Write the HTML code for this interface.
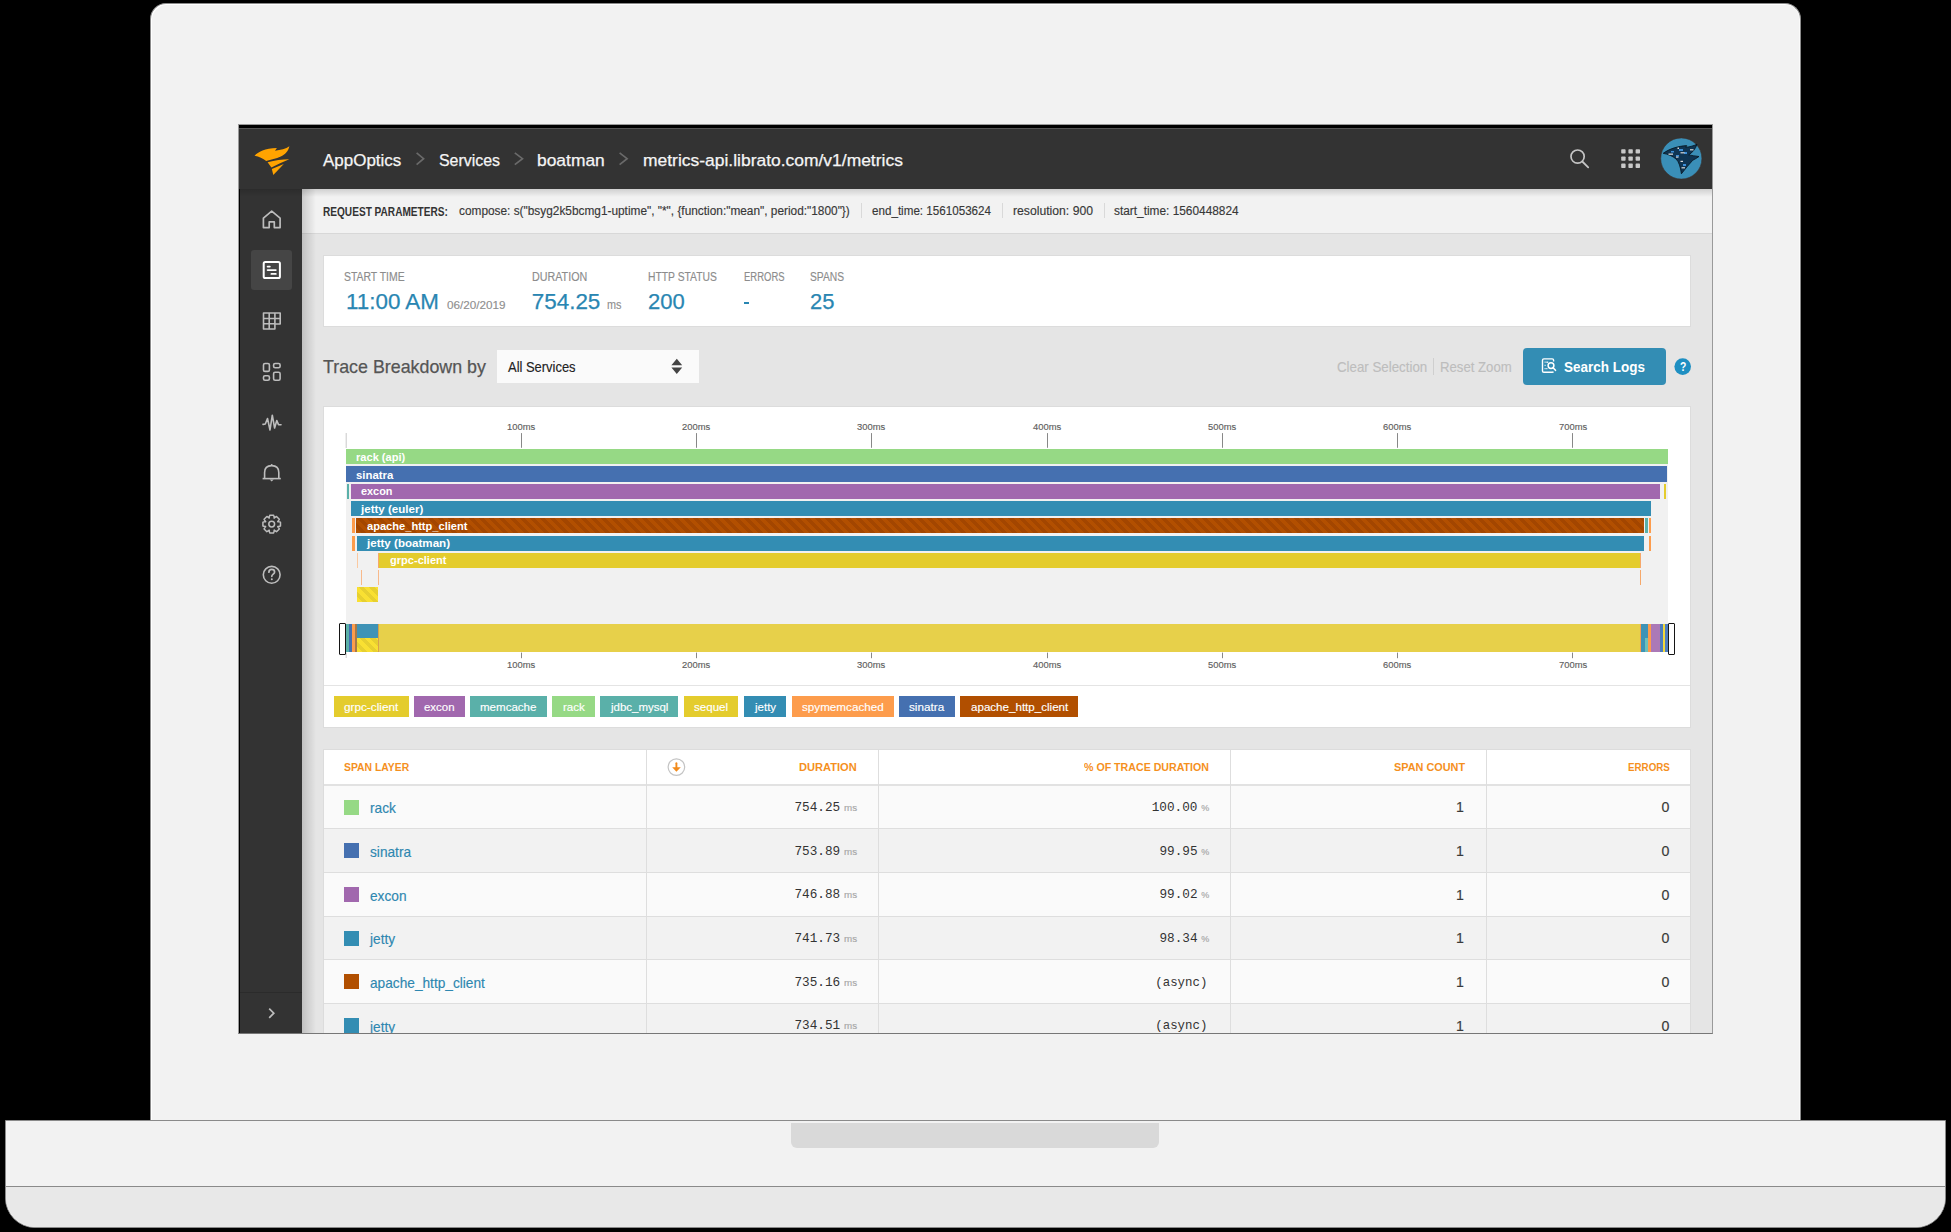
<!DOCTYPE html><html><head><meta charset="utf-8"><style>
*{margin:0;padding:0;box-sizing:border-box}
html,body{width:1951px;height:1232px;overflow:hidden;background:#000;font-family:"Liberation Sans",sans-serif}
.a{position:absolute}
.t{position:absolute;white-space:nowrap;transform-origin:0 0}
svg{position:absolute;overflow:visible}
#lid{left:150px;top:3px;width:1651px;height:1118px;background:#f2f2f2;border:1px solid #8a8a8a;border-bottom:none;border-radius:16px 16px 0 0;box-shadow:inset 1px 1px 0 #fff,inset -1px 0 0 #fafafa}
#base{left:5px;top:1120px;width:1941px;height:108px;background:#f2f2f2;border:1px solid #8a8a8a;border-radius:0 0 30px 30px;overflow:hidden}
#base .low{left:0;top:65px;width:100%;height:45px;background:#e8e8e8;border-top:1px solid #8a8a8a}
#notch{left:785px;top:2px;width:368px;height:25px;background:#d9d9d9;border-radius:0 0 6px 6px}
#screen{left:238px;top:124px;width:1475px;height:910px;background:#000;border:1px solid #9a9a9a;border-bottom-color:#777;overflow:hidden}
#S{left:-239px;top:-125px;width:1951px;height:1232px}
</style></head><body>
<div id="lid" class="a"></div>
<div id="base" class="a"><div class="a low"></div><div id="notch" class="a"></div></div>
<div id="screen" class="a"><div id="S" class="a">
<div class="a" style="left:239.00px;top:128.00px;width:1473.00px;height:61.00px;background:#333;"></div>
<div class="a" style="left:239.00px;top:128.00px;width:1473.00px;height:1.00px;background:#555;"></div>
<svg style="left:0;top:0" width="1951" height="1232" viewBox="0 0 1951 1232"><path fill="#ffa300" d="M254.6,155.7 C258,151.6 265,148.4 276.9,147.9 L275.0,150.7 C280.5,150.2 286,148.8 289.4,146.3 C288.3,151.3 285,154.6 280.8,156.6 C276,158.7 271,159.9 266.2,161.0 C263,158.6 259,156.4 254.6,155.7 Z"/><path fill="#ffa300" d="M267.6,162.2 C275,160.3 282,159.3 289.3,159.2 C283,161.7 277,164.5 271.4,167.6 Z"/><path fill="#ffa300" d="M271.8,169.0 L283.8,164.0 L273.3,174.9 Z"/></svg>
<div class="t" style="left:323.20px;top:153.00px;font-size:16.8px;line-height:16.8px;font-family:'Liberation Sans',sans-serif;color:#f5f5f5;transform:scaleX(1.0116);-webkit-text-stroke:0.25px #f5f5f5;">AppOptics</div>
<div class="t" style="left:438.50px;top:153.00px;font-size:16.8px;line-height:16.8px;font-family:'Liberation Sans',sans-serif;color:#f5f5f5;transform:scaleX(0.9488);-webkit-text-stroke:0.25px #f5f5f5;">Services</div>
<div class="t" style="left:537.10px;top:153.00px;font-size:16.8px;line-height:16.8px;font-family:'Liberation Sans',sans-serif;color:#f5f5f5;transform:scaleX(1.0375);-webkit-text-stroke:0.25px #f5f5f5;">boatman</div>
<div class="t" style="left:642.80px;top:153.00px;font-size:16.8px;line-height:16.8px;font-family:'Liberation Sans',sans-serif;color:#f5f5f5;transform:scaleX(1.0398);-webkit-text-stroke:0.25px #f5f5f5;">metrics-api.librato.com/v1/metrics</div>
<svg style="left:0;top:0" width="1951" height="1232" viewBox="0 0 1951 1232"><polyline points="416.6,152.8 423.6,158.7 416.6,164.6" fill="none" stroke="#6a6a6a" stroke-width="1.7"/><polyline points="514.8,152.8 522.5,158.7 514.8,164.6" fill="none" stroke="#6a6a6a" stroke-width="1.7"/><polyline points="619.6,152.8 627.1,158.7 619.6,164.6" fill="none" stroke="#6a6a6a" stroke-width="1.7"/></svg>
<svg style="left:0;top:0" width="1951" height="1232" viewBox="0 0 1951 1232"><circle cx="1577.6" cy="156.6" r="6.6" fill="none" stroke="#c4c4c4" stroke-width="1.7"/><line x1="1582.3" y1="161.5" x2="1588.2" y2="167.3" stroke="#c4c4c4" stroke-width="1.8" stroke-linecap="round"/></svg>
<svg style="left:0;top:0" width="1951" height="1232" viewBox="0 0 1951 1232"><rect x="1621.2" y="149.2" width="4.4" height="4.4" rx="0.8" fill="#c8c8c8"/><rect x="1621.2" y="156.4" width="4.4" height="4.4" rx="0.8" fill="#c8c8c8"/><rect x="1621.2" y="163.6" width="4.4" height="4.4" rx="0.8" fill="#c8c8c8"/><rect x="1628.4" y="149.2" width="4.4" height="4.4" rx="0.8" fill="#c8c8c8"/><rect x="1628.4" y="156.4" width="4.4" height="4.4" rx="0.8" fill="#c8c8c8"/><rect x="1628.4" y="163.6" width="4.4" height="4.4" rx="0.8" fill="#c8c8c8"/><rect x="1635.6" y="149.2" width="4.4" height="4.4" rx="0.8" fill="#c8c8c8"/><rect x="1635.6" y="156.4" width="4.4" height="4.4" rx="0.8" fill="#c8c8c8"/><rect x="1635.6" y="163.6" width="4.4" height="4.4" rx="0.8" fill="#c8c8c8"/></svg>
<svg style="left:0;top:0" width="1951" height="1232" viewBox="0 0 1951 1232"><circle cx="1681.3" cy="158.5" r="20.6" fill="#3a8fb8" stroke="#3b2f2a" stroke-width="0.6"/><path fill="#0f3553" stroke="#06121c" stroke-width="0.8" d="M1663.2,153.3 C1670,148.5 1678,146.2 1686.7,145.6 L1685.8,147.3 C1690,146.8 1694,145.8 1697.0,144.2 C1695.5,149 1692.5,152.5 1688.7,154.9 C1692,155.6 1695.5,156 1699.0,156.5 C1697,158 1694.8,159.2 1692.7,160.3 C1689,164.5 1685,169 1681.4,173.8 C1680.5,167 1679,162 1676.1,159.0 C1672.5,156 1668,154.2 1663.2,153.3 Z"/><g fill="#3d8fd8"><rect x="1671" y="151" width="3" height="1.5"/><rect x="1679" y="149" width="4" height="2"/><rect x="1684" y="152" width="3" height="2"/><rect x="1683" y="164" width="3" height="2"/><rect x="1676" y="155" width="3" height="1.6"/></g><g fill="#d8d8d8"><rect x="1668.5" y="153.5" width="4.5" height="1.3"/><rect x="1680.5" y="152.2" width="4" height="1.2"/><rect x="1690" y="149.2" width="3.5" height="1.2"/><rect x="1676" y="156.5" width="2.5" height="1.2"/><rect x="1680.5" y="160.8" width="2.5" height="1.2"/><rect x="1681.5" y="167.2" width="3.5" height="1.2"/><rect x="1677.5" y="147.5" width="1.5" height="1.5"/></g></svg>
<div class="a" style="left:240.00px;top:189.00px;width:62.00px;height:845.00px;background:#333;"></div>
<div class="a" style="left:251.40px;top:250.00px;width:40.60px;height:40.40px;background:#454545;border-radius:3px"></div>
<div class="a" style="left:240.00px;top:992.00px;width:62.00px;height:1.00px;background:#2b2b2b;"></div>
<svg style="left:0;top:0" width="1951" height="1232" viewBox="0 0 1951 1232"><path fill="none" stroke="#bdbdbd" stroke-width="1.7" stroke-linejoin="round" d="M263.4,218.2 L271.7,211.2 L280.1,218.2 L280.1,227.6 L274.3,227.6 L274.3,221.9 L269.2,221.9 L269.2,227.6 L263.4,227.6 Z"/><rect x="263.7" y="262" width="16.2" height="16" rx="1.6" fill="none" stroke="#fff" stroke-width="2"/><g stroke="#fff" stroke-width="1.8" stroke-linecap="round"><line x1="267.6" y1="266.6" x2="269.8" y2="266.6"/><line x1="267.6" y1="270.1" x2="275.8" y2="270.1"/><line x1="271.4" y1="273.9" x2="275.8" y2="273.9"/></g><path fill="none" stroke="#bdbdbd" stroke-width="1.6" stroke-linejoin="round" d="M263.5,313 H280.2 V324 H274.9 V329 H263.5 Z M263.5,318.5 H280.2 M263.5,323.8 H274.9 M269.2,313 V329 M274.9,313 V324"/><rect x="263.5" y="363.5" width="5.9" height="7.9" rx="1.5" fill="none" stroke="#bdbdbd" stroke-width="1.6"/><rect x="273.6" y="363.5" width="6.5" height="4.3" rx="1.5" fill="none" stroke="#bdbdbd" stroke-width="1.6"/><rect x="263.5" y="375.8" width="5.9" height="4.4" rx="1.5" fill="none" stroke="#bdbdbd" stroke-width="1.6"/><rect x="273.6" y="372.2" width="6.5" height="8.0" rx="1.5" fill="none" stroke="#bdbdbd" stroke-width="1.6"/><polyline fill="none" stroke="#bdbdbd" stroke-width="1.6" stroke-linejoin="round" stroke-linecap="round" points="263,424.4 265.3,424 267.5,418.5 270,430 272.3,415.2 274.6,428 276.8,420.5 278.5,424.6 281,424.8"/><path fill="none" stroke="#bdbdbd" stroke-width="1.6" stroke-linejoin="round" d="M264.6,478.2 V472.5 C264.6,468 267.6,465.6 271.7,465.6 C275.8,465.6 278.8,468 278.8,472.5 V478.2"/><line x1="262.6" y1="478.6" x2="280.8" y2="478.6" stroke="#bdbdbd" stroke-width="1.6"/><path d="M269.6,479.4 H273.8 L271.7,481.6 Z" fill="#bdbdbd"/><circle cx="271.7" cy="464.9" r="0.9" fill="#bdbdbd"/><polygon fill="none" stroke="#bdbdbd" stroke-width="1.5" stroke-linejoin="round" points="280.48,522.14 280.48,526.06 277.73,526.79 277.86,526.46 279.30,528.92 276.52,531.70 274.06,530.26 274.39,530.13 273.66,532.88 269.74,532.88 269.01,530.13 269.34,530.26 266.88,531.70 264.10,528.92 265.54,526.46 265.67,526.79 262.92,526.06 262.92,522.14 265.67,521.41 265.54,521.74 264.10,519.28 266.88,516.50 269.34,517.94 269.01,518.07 269.74,515.32 273.66,515.32 274.39,518.07 274.06,517.94 276.52,516.50 279.30,519.28 277.86,521.74 277.73,521.41"/><circle cx="271.7" cy="524.1" r="2.9" fill="none" stroke="#bdbdbd" stroke-width="1.5"/><circle cx="271.7" cy="574.8" r="8.4" fill="none" stroke="#bdbdbd" stroke-width="1.6"/><path fill="none" stroke="#bdbdbd" stroke-width="1.7" stroke-linecap="round" d="M268.9,572.2 C268.9,570.3 270.1,569.3 271.8,569.3 C273.5,569.3 274.6,570.4 274.6,571.9 C274.6,574 271.8,574.2 271.8,576.3"/><circle cx="271.8" cy="579.3" r="1" fill="#bdbdbd"/><polyline points="269.2,1008.6 273.8,1013.2 269.2,1017.8" fill="none" stroke="#bdbdbd" stroke-width="1.7"/></svg>
<div class="a" style="left:302.00px;top:189.00px;width:1410.00px;height:845.00px;background:#e5e5e5;"></div>
<div class="a" style="left:302.00px;top:189.00px;width:1410.00px;height:45.00px;background:#f2f2f2;"></div>
<div class="a" style="left:302.00px;top:233.00px;width:1410.00px;height:1.00px;background:#d8d8d8;"></div>
<div class="a" style="left:302.00px;top:189.00px;width:14.00px;height:845.00px;background:linear-gradient(90deg,rgba(0,0,0,.16),rgba(0,0,0,0));"></div>
<div class="a" style="left:240.00px;top:189.00px;width:1472.00px;height:8.00px;background:linear-gradient(180deg,rgba(0,0,0,.14),rgba(0,0,0,0));"></div>
<div class="t" style="left:323.10px;top:206.00px;font-size:12px;line-height:12px;font-family:'Liberation Sans',sans-serif;color:#333;font-weight:bold;transform:scaleX(0.8411);">REQUEST PARAMETERS:</div>
<div class="t" style="left:459.30px;top:205.00px;font-size:12px;line-height:12px;font-family:'Liberation Sans',sans-serif;color:#383838;transform:scaleX(0.9877);-webkit-text-stroke:0.15px #383838;">compose: s("bsyg2k5bcmg1-uptime", "*", {function:"mean", period:"1800"})</div>
<div class="t" style="left:871.80px;top:205.00px;font-size:12px;line-height:12px;font-family:'Liberation Sans',sans-serif;color:#383838;transform:scaleX(0.9695);-webkit-text-stroke:0.15px #383838;">end_time: 1561053624</div>
<div class="t" style="left:1013.00px;top:205.00px;font-size:12px;line-height:12px;font-family:'Liberation Sans',sans-serif;color:#383838;transform:scaleX(1.0159);-webkit-text-stroke:0.15px #383838;">resolution: 900</div>
<div class="t" style="left:1114.40px;top:205.00px;font-size:12px;line-height:12px;font-family:'Liberation Sans',sans-serif;color:#383838;transform:scaleX(0.9885);-webkit-text-stroke:0.15px #383838;">start_time: 1560448824</div>
<div class="a" style="left:860.50px;top:203.30px;width:1.00px;height:14.70px;background:#d9d9d9;"></div>
<div class="a" style="left:1002.00px;top:203.30px;width:1.00px;height:14.70px;background:#d9d9d9;"></div>
<div class="a" style="left:1103.50px;top:203.30px;width:1.00px;height:14.70px;background:#d9d9d9;"></div>
<div class="a" style="left:323.60px;top:256.20px;width:1366.40px;height:69.80px;background:#fff;box-shadow:0 0 0 1px #dcdcdc"></div>
<div class="t" style="left:344.00px;top:271.00px;font-size:12.0px;line-height:12.0px;font-family:'Liberation Sans',sans-serif;color:#8c8c8c;transform:scaleX(0.8688);-webkit-text-stroke:0.15px #8c8c8c;">START TIME</div>
<div class="t" style="left:531.80px;top:271.00px;font-size:12.0px;line-height:12.0px;font-family:'Liberation Sans',sans-serif;color:#8c8c8c;transform:scaleX(0.8939);-webkit-text-stroke:0.15px #8c8c8c;">DURATION</div>
<div class="t" style="left:648.00px;top:271.00px;font-size:12.0px;line-height:12.0px;font-family:'Liberation Sans',sans-serif;color:#8c8c8c;transform:scaleX(0.8612);-webkit-text-stroke:0.15px #8c8c8c;">HTTP STATUS</div>
<div class="t" style="left:743.50px;top:271.00px;font-size:12.0px;line-height:12.0px;font-family:'Liberation Sans',sans-serif;color:#8c8c8c;transform:scaleX(0.7902);-webkit-text-stroke:0.15px #8c8c8c;">ERRORS</div>
<div class="t" style="left:810.00px;top:271.00px;font-size:12.0px;line-height:12.0px;font-family:'Liberation Sans',sans-serif;color:#8c8c8c;transform:scaleX(0.8553);-webkit-text-stroke:0.15px #8c8c8c;">SPANS</div>
<div class="t" style="left:346.00px;top:291.00px;font-size:22.4px;line-height:22.4px;font-family:'Liberation Sans',sans-serif;color:#2986b2;-webkit-text-stroke:0.25px #2986b2;">11:00 AM</div>
<div class="t" style="left:446.50px;top:300.00px;font-size:11.5px;line-height:11.5px;font-family:'Liberation Sans',sans-serif;color:#8f8f8f;transform:scaleX(1.0174);-webkit-text-stroke:0.15px #8f8f8f;">06/20/2019</div>
<div class="t" style="left:531.80px;top:291.00px;font-size:22.4px;line-height:22.4px;font-family:'Liberation Sans',sans-serif;color:#2986b2;-webkit-text-stroke:0.25px #2986b2;">754.25</div>
<div class="t" style="left:606.60px;top:298.00px;font-size:13px;line-height:13px;font-family:'Liberation Sans',sans-serif;color:#8f8f8f;transform:scaleX(0.8348);-webkit-text-stroke:0.15px #8f8f8f;">ms</div>
<div class="t" style="left:648.00px;top:291.00px;font-size:22.4px;line-height:22.4px;font-family:'Liberation Sans',sans-serif;color:#2986b2;transform:scaleX(0.9826);-webkit-text-stroke:0.25px #2986b2;">200</div>
<div class="a" style="left:743.50px;top:302.20px;width:5.50px;height:2.20px;background:#2986b2;"></div>
<div class="t" style="left:810.00px;top:291.00px;font-size:22.4px;line-height:22.4px;font-family:'Liberation Sans',sans-serif;color:#2986b2;transform:scaleX(0.9800);-webkit-text-stroke:0.25px #2986b2;">25</div>
<div class="t" style="left:323.30px;top:357.00px;font-size:19px;line-height:19px;font-family:'Liberation Sans',sans-serif;color:#555;transform:scaleX(0.9389);-webkit-text-stroke:0.25px #555;">Trace Breakdown by</div>
<div class="a" style="left:497.00px;top:349.60px;width:201.70px;height:33.40px;background:#fafafa;"></div>
<div class="t" style="left:508.40px;top:360.00px;font-size:14.6px;line-height:14.6px;font-family:'Liberation Sans',sans-serif;color:#222;transform:scaleX(0.8866);-webkit-text-stroke:0.15px #222;">All Services</div>
<svg style="left:0;top:0" width="1951" height="1232" viewBox="0 0 1951 1232"><path d="M671.4,365.2 L676.8,358.8 L682.2,365.2 Z M671.4,367.6 L682.2,367.6 L676.8,374 Z" fill="#444"/></svg>
<div class="t" style="left:1337.00px;top:359.00px;font-size:15px;line-height:15px;font-family:'Liberation Sans',sans-serif;color:#bdbdbd;transform:scaleX(0.8865);-webkit-text-stroke:0.15px #bdbdbd;">Clear Selection</div>
<div class="a" style="left:1433.00px;top:358.00px;width:1.00px;height:17.00px;background:#cfcfcf;"></div>
<div class="t" style="left:1439.50px;top:359.00px;font-size:15px;line-height:15px;font-family:'Liberation Sans',sans-serif;color:#bdbdbd;transform:scaleX(0.8771);-webkit-text-stroke:0.15px #bdbdbd;">Reset Zoom</div>
<div class="a" style="left:1522.50px;top:347.80px;width:143.20px;height:36.90px;background:#338db4;border-radius:4px"></div>
<div class="t" style="left:1563.90px;top:359.00px;font-size:15.3px;line-height:15.3px;font-family:'Liberation Sans',sans-serif;color:#fff;font-weight:bold;transform:scaleX(0.8817);">Search Logs</div>
<svg style="left:0;top:0" width="1951" height="1232" viewBox="0 0 1951 1232"><path fill="none" stroke="#fff" stroke-width="1.4" d="M1553.6,361.6 V360.3 Q1553.6,358.9 1552.2,358.9 H1543.9 Q1542.5,358.9 1542.5,360.3 V370.9 Q1542.5,372.3 1543.9,372.3 H1552.2 Q1553.1,372.3 1553.4,371.6"/><g stroke="#fff" stroke-width="1.3"><line x1="1544.6" y1="362.2" x2="1545.6" y2="362.2"/><line x1="1546.3" y1="362.2" x2="1548.2" y2="362.2"/><line x1="1544.6" y1="365.4" x2="1545.6" y2="365.4"/><line x1="1544.6" y1="368.6" x2="1545.6" y2="368.6"/><line x1="1546.3" y1="368.6" x2="1547.4" y2="368.6"/></g><circle cx="1551" cy="365.6" r="2.9" fill="none" stroke="#fff" stroke-width="1.5"/><line x1="1553.1" y1="367.8" x2="1555.5" y2="370.3" stroke="#fff" stroke-width="1.6" stroke-linecap="round"/><circle cx="1682.7" cy="366.6" r="8.3" fill="#1e8fc2"/></svg>
<div class="t" style="left:1679.60px;top:361.00px;font-size:12.5px;line-height:12.5px;font-family:'Liberation Sans',sans-serif;color:#fff;font-weight:bold;transform:scaleX(0.8258);">?</div>
<div class="a" style="left:323.60px;top:406.60px;width:1366.40px;height:320.20px;background:#fff;box-shadow:0 0 0 1px #dcdcdc"></div>
<div class="a" style="left:323.60px;top:684.60px;width:1366.40px;height:1.60px;background:#e4e4e4;"></div>
<div class="a" style="left:346.00px;top:449.00px;width:1322.00px;height:175.00px;background:#f1f1f1;"></div>
<svg style="left:0;top:0" width="1951" height="1232" viewBox="0 0 1951 1232"><line x1="346.2" y1="433" x2="346.2" y2="448" stroke="#c8c8c8" stroke-width="1"/><line x1="521.50" y1="433.1" x2="521.50" y2="447.8" stroke="#888" stroke-width="1"/><line x1="521.50" y1="652.6" x2="521.50" y2="658.2" stroke="#888" stroke-width="1"/><line x1="696.50" y1="433.1" x2="696.50" y2="447.8" stroke="#888" stroke-width="1"/><line x1="696.50" y1="652.6" x2="696.50" y2="658.2" stroke="#888" stroke-width="1"/><line x1="871.50" y1="433.1" x2="871.50" y2="447.8" stroke="#888" stroke-width="1"/><line x1="871.50" y1="652.6" x2="871.50" y2="658.2" stroke="#888" stroke-width="1"/><line x1="1047.50" y1="433.1" x2="1047.50" y2="447.8" stroke="#888" stroke-width="1"/><line x1="1047.50" y1="652.6" x2="1047.50" y2="658.2" stroke="#888" stroke-width="1"/><line x1="1222.50" y1="433.1" x2="1222.50" y2="447.8" stroke="#888" stroke-width="1"/><line x1="1222.50" y1="652.6" x2="1222.50" y2="658.2" stroke="#888" stroke-width="1"/><line x1="1397.50" y1="433.1" x2="1397.50" y2="447.8" stroke="#888" stroke-width="1"/><line x1="1397.50" y1="652.6" x2="1397.50" y2="658.2" stroke="#888" stroke-width="1"/><line x1="1572.50" y1="433.1" x2="1572.50" y2="447.8" stroke="#888" stroke-width="1"/><line x1="1572.50" y1="652.6" x2="1572.50" y2="658.2" stroke="#888" stroke-width="1"/><line x1="346.2" y1="652.6" x2="346.2" y2="658" stroke="#ccc" stroke-width="1"/></svg>
<div class="t" style="left:506.93px;top:422.00px;font-size:9.6px;line-height:9.6px;font-family:'Liberation Sans',sans-serif;color:#606060;transform:scaleX(0.9774);-webkit-text-stroke:0.15px #606060;">100ms</div>
<div class="t" style="left:506.93px;top:660.00px;font-size:9.6px;line-height:9.6px;font-family:'Liberation Sans',sans-serif;color:#606060;transform:scaleX(0.9774);-webkit-text-stroke:0.15px #606060;">100ms</div>
<div class="t" style="left:682.21px;top:422.00px;font-size:9.6px;line-height:9.6px;font-family:'Liberation Sans',sans-serif;color:#606060;transform:scaleX(0.9774);-webkit-text-stroke:0.15px #606060;">200ms</div>
<div class="t" style="left:682.21px;top:660.00px;font-size:9.6px;line-height:9.6px;font-family:'Liberation Sans',sans-serif;color:#606060;transform:scaleX(0.9774);-webkit-text-stroke:0.15px #606060;">200ms</div>
<div class="t" style="left:857.49px;top:422.00px;font-size:9.6px;line-height:9.6px;font-family:'Liberation Sans',sans-serif;color:#606060;transform:scaleX(0.9774);-webkit-text-stroke:0.15px #606060;">300ms</div>
<div class="t" style="left:857.49px;top:660.00px;font-size:9.6px;line-height:9.6px;font-family:'Liberation Sans',sans-serif;color:#606060;transform:scaleX(0.9774);-webkit-text-stroke:0.15px #606060;">300ms</div>
<div class="t" style="left:1032.77px;top:422.00px;font-size:9.6px;line-height:9.6px;font-family:'Liberation Sans',sans-serif;color:#606060;transform:scaleX(0.9774);-webkit-text-stroke:0.15px #606060;">400ms</div>
<div class="t" style="left:1032.77px;top:660.00px;font-size:9.6px;line-height:9.6px;font-family:'Liberation Sans',sans-serif;color:#606060;transform:scaleX(0.9774);-webkit-text-stroke:0.15px #606060;">400ms</div>
<div class="t" style="left:1208.05px;top:422.00px;font-size:9.6px;line-height:9.6px;font-family:'Liberation Sans',sans-serif;color:#606060;transform:scaleX(0.9774);-webkit-text-stroke:0.15px #606060;">500ms</div>
<div class="t" style="left:1208.05px;top:660.00px;font-size:9.6px;line-height:9.6px;font-family:'Liberation Sans',sans-serif;color:#606060;transform:scaleX(0.9774);-webkit-text-stroke:0.15px #606060;">500ms</div>
<div class="t" style="left:1383.33px;top:422.00px;font-size:9.6px;line-height:9.6px;font-family:'Liberation Sans',sans-serif;color:#606060;transform:scaleX(0.9774);-webkit-text-stroke:0.15px #606060;">600ms</div>
<div class="t" style="left:1383.33px;top:660.00px;font-size:9.6px;line-height:9.6px;font-family:'Liberation Sans',sans-serif;color:#606060;transform:scaleX(0.9774);-webkit-text-stroke:0.15px #606060;">600ms</div>
<div class="t" style="left:1558.61px;top:422.00px;font-size:9.6px;line-height:9.6px;font-family:'Liberation Sans',sans-serif;color:#606060;transform:scaleX(0.9774);-webkit-text-stroke:0.15px #606060;">700ms</div>
<div class="t" style="left:1558.61px;top:660.00px;font-size:9.6px;line-height:9.6px;font-family:'Liberation Sans',sans-serif;color:#606060;transform:scaleX(0.9774);-webkit-text-stroke:0.15px #606060;">700ms</div>
<div class="a" style="left:346.10px;top:449.20px;width:1321.80px;height:15.20px;background:#96d985;"></div>
<div class="a" style="left:346.10px;top:466.47px;width:1321.40px;height:15.20px;background:#4570b0;"></div>
<div class="a" style="left:346.80px;top:483.74px;width:2.20px;height:15.20px;background:#5ab0a9;"></div>
<div class="a" style="left:351.40px;top:483.74px;width:1309.00px;height:15.20px;background:#a168ae;"></div>
<div class="a" style="left:1664.00px;top:483.74px;width:1.60px;height:15.20px;background:#e4cc2d;"></div>
<div class="a" style="left:351.40px;top:501.01px;width:1299.80px;height:15.20px;background:#338db3;"></div>
<div class="a" style="left:351.90px;top:518.28px;width:3.30px;height:15.20px;background:#fd9c4c;"></div>
<div class="a" style="left:355.80px;top:518.28px;width:1288.20px;height:15.20px;background:#b14f00;background:repeating-linear-gradient(45deg,#b24f00 0 3.6px,#a34600 3.6px 7.2px)"></div>
<div class="a" style="left:1645.00px;top:518.28px;width:2.80px;height:15.20px;background:#5ab0a9;"></div>
<div class="a" style="left:1648.70px;top:518.28px;width:2.30px;height:15.20px;background:#fd9c4c;"></div>
<div class="a" style="left:351.80px;top:535.55px;width:3.40px;height:15.20px;background:#fd9c4c;"></div>
<div class="a" style="left:357.00px;top:535.55px;width:1287.00px;height:15.20px;background:#338db3;"></div>
<div class="a" style="left:1648.70px;top:535.55px;width:2.30px;height:15.20px;background:#fd9c4c;"></div>
<div class="a" style="left:356.60px;top:552.82px;width:1.00px;height:15.20px;background:#fbc9a0;"></div>
<div class="a" style="left:378.20px;top:552.82px;width:1.10px;height:15.20px;background:#f6a86a;"></div>
<div class="a" style="left:379.30px;top:552.82px;width:1260.70px;height:15.20px;background:#e4cc2d;"></div>
<div class="a" style="left:1640.00px;top:552.82px;width:1.00px;height:15.20px;background:#f6a86a;"></div>
<div class="a" style="left:361.00px;top:570.10px;width:1.00px;height:15.10px;background:#f8b98a;"></div>
<div class="a" style="left:378.00px;top:570.10px;width:1.00px;height:15.10px;background:#f8b98a;"></div>
<div class="a" style="left:1639.80px;top:570.10px;width:1.20px;height:15.10px;background:#f6a86a;"></div>
<div class="a" style="left:357.00px;top:587.30px;width:21.20px;height:15.20px;background:#f9e032;background:repeating-linear-gradient(45deg,#f9e032 0 3.8px,#e7d030 3.8px 7.6px)"></div>
<div class="t" style="left:356.30px;top:452.00px;font-size:11.8px;line-height:11.8px;font-family:'Liberation Sans',sans-serif;color:#fff;font-weight:bold;transform:scaleX(0.9390);">rack (api)</div>
<div class="t" style="left:356.00px;top:470.00px;font-size:11.8px;line-height:11.8px;font-family:'Liberation Sans',sans-serif;color:#fff;font-weight:bold;transform:scaleX(0.9641);">sinatra</div>
<div class="t" style="left:361.40px;top:486.00px;font-size:11.8px;line-height:11.8px;font-family:'Liberation Sans',sans-serif;color:#fff;font-weight:bold;transform:scaleX(0.9235);">excon</div>
<div class="t" style="left:360.95px;top:504.00px;font-size:11.8px;line-height:11.8px;font-family:'Liberation Sans',sans-serif;color:#fff;font-weight:bold;transform:scaleX(0.9804);">jetty (euler)</div>
<div class="t" style="left:366.60px;top:521.00px;font-size:11.8px;line-height:11.8px;font-family:'Liberation Sans',sans-serif;color:#fff;font-weight:bold;transform:scaleX(0.9402);">apache_http_client</div>
<div class="t" style="left:367.25px;top:538.00px;font-size:11.8px;line-height:11.8px;font-family:'Liberation Sans',sans-serif;color:#fff;font-weight:bold;transform:scaleX(0.9817);">jetty (boatman)</div>
<div class="t" style="left:389.70px;top:555.00px;font-size:11.8px;line-height:11.8px;font-family:'Liberation Sans',sans-serif;color:#fff;font-weight:bold;transform:scaleX(0.9372);">grpc-client</div>
<div class="a" style="left:1639.00px;top:623.90px;width:28.80px;height:28.10px;background:#4d7dbd;"></div>
<div class="a" style="left:346.20px;top:623.90px;width:2.80px;height:28.10px;background:#5ab0a9;"></div>
<div class="a" style="left:349.00px;top:623.90px;width:2.80px;height:28.10px;background:#4570b0;"></div>
<div class="a" style="left:351.80px;top:623.90px;width:0.60px;height:28.10px;background:#8aa;"></div>
<div class="a" style="left:352.20px;top:623.90px;width:2.80px;height:28.10px;background:#fd9c4c;"></div>
<div class="a" style="left:355.00px;top:623.90px;width:2.00px;height:28.10px;background:#a57a4a;"></div>
<div class="a" style="left:379.00px;top:623.90px;width:1260.60px;height:28.10px;background:#e7d04a;"></div>
<div class="a" style="left:1639.60px;top:623.90px;width:1.60px;height:28.10px;background:#fd9c4c;"></div>
<div class="a" style="left:1641.20px;top:623.90px;width:6.80px;height:28.10px;background:#3f93b6;"></div>
<div class="a" style="left:1648.00px;top:623.90px;width:3.00px;height:28.10px;background:#fd9c4c;"></div>
<div class="a" style="left:1651.00px;top:623.90px;width:9.30px;height:28.10px;background:#ab79b7;"></div>
<div class="a" style="left:1660.30px;top:623.90px;width:3.10px;height:28.10px;background:#4d7dbd;"></div>
<div class="a" style="left:1663.40px;top:623.90px;width:2.10px;height:28.10px;background:#f2d93a;"></div>
<div class="a" style="left:1665.50px;top:623.90px;width:2.30px;height:28.10px;background:#4d7dbd;"></div>
<div class="a" style="left:357.00px;top:623.90px;width:21.50px;height:14.00px;background:#3f93b6;"></div>
<div class="a" style="left:357.00px;top:637.90px;width:21.50px;height:14.10px;background:#f9e032;background:repeating-linear-gradient(45deg,#f9e032 0 3.8px,#e7d030 3.8px 7.6px)"></div>
<div class="a" style="left:378.30px;top:623.90px;width:1.00px;height:28.10px;background:#d9a24a;"></div>
<div class="a" style="left:1645.00px;top:637.90px;width:3.00px;height:14.10px;background:#6cc0bb;"></div>
<div class="a" style="left:339.00px;top:623.20px;width:6.80px;height:32.00px;background:#fff;border:1.4px solid #151515;border-radius:1px"></div>
<div class="a" style="left:1668.20px;top:623.20px;width:6.80px;height:32.00px;background:#fff;border:1.4px solid #151515;border-radius:1px"></div>
<div class="a" style="left:334.00px;top:696.00px;width:74.80px;height:21.30px;background:#e4cc2d;"></div>

<div class="t" style="left:344.25px;top:702.00px;font-size:11.8px;line-height:11.8px;font-family:'Liberation Sans',sans-serif;color:#fff;transform:scaleX(0.9963);-webkit-text-stroke:0.15px #fff;">grpc-client</div>
<div class="a" style="left:414.00px;top:696.00px;width:51.00px;height:21.30px;background:#a168ae;"></div>

<div class="t" style="left:424.25px;top:702.00px;font-size:11.8px;line-height:11.8px;font-family:'Liberation Sans',sans-serif;color:#fff;transform:scaleX(0.9683);-webkit-text-stroke:0.15px #fff;">excon</div>
<div class="a" style="left:470.00px;top:696.00px;width:77.00px;height:21.30px;background:#5ab0a9;"></div>

<div class="t" style="left:480.25px;top:702.00px;font-size:11.8px;line-height:11.8px;font-family:'Liberation Sans',sans-serif;color:#fff;transform:scaleX(0.9784);-webkit-text-stroke:0.15px #fff;">memcache</div>
<div class="a" style="left:552.30px;top:696.00px;width:42.60px;height:21.30px;background:#96d985;"></div>

<div class="t" style="left:562.55px;top:702.00px;font-size:11.8px;line-height:11.8px;font-family:'Liberation Sans',sans-serif;color:#fff;transform:scaleX(0.9822);-webkit-text-stroke:0.15px #fff;">rack</div>
<div class="a" style="left:600.10px;top:696.00px;width:78.30px;height:21.30px;background:#5ab0a9;"></div>

<div class="t" style="left:610.84px;top:702.00px;font-size:11.8px;line-height:11.8px;font-family:'Liberation Sans',sans-serif;color:#fff;transform:scaleX(0.9714);-webkit-text-stroke:0.15px #fff;">jdbc_mysql</div>
<div class="a" style="left:683.80px;top:696.00px;width:54.60px;height:21.30px;background:#e4cc2d;"></div>

<div class="t" style="left:694.05px;top:702.00px;font-size:11.8px;line-height:11.8px;font-family:'Liberation Sans',sans-serif;color:#fff;transform:scaleX(0.9813);-webkit-text-stroke:0.15px #fff;">sequel</div>
<div class="a" style="left:743.80px;top:696.00px;width:42.20px;height:21.30px;background:#338db3;"></div>

<div class="t" style="left:754.54px;top:702.00px;font-size:11.8px;line-height:11.8px;font-family:'Liberation Sans',sans-serif;color:#fff;transform:scaleX(0.9753);-webkit-text-stroke:0.15px #fff;">jetty</div>
<div class="a" style="left:791.50px;top:696.00px;width:102.30px;height:21.30px;background:#fd9c4c;"></div>

<div class="t" style="left:801.75px;top:702.00px;font-size:11.8px;line-height:11.8px;font-family:'Liberation Sans',sans-serif;color:#fff;transform:scaleX(0.9885);-webkit-text-stroke:0.15px #fff;">spymemcached</div>
<div class="a" style="left:899.20px;top:696.00px;width:55.80px;height:21.30px;background:#4570b0;"></div>

<div class="t" style="left:909.45px;top:702.00px;font-size:11.8px;line-height:11.8px;font-family:'Liberation Sans',sans-serif;color:#fff;transform:scaleX(0.9944);-webkit-text-stroke:0.15px #fff;">sinatra</div>
<div class="a" style="left:960.30px;top:696.00px;width:117.70px;height:21.30px;background:#b14f00;"></div>

<div class="t" style="left:970.55px;top:702.00px;font-size:11.8px;line-height:11.8px;font-family:'Liberation Sans',sans-serif;color:#fff;transform:scaleX(0.9818);-webkit-text-stroke:0.15px #fff;">apache_http_client</div>
<div class="a" style="left:323.60px;top:749.80px;width:1366.40px;height:300.00px;background:#fff;box-shadow:0 0 0 1px #dcdcdc"></div>
<div class="a" style="left:323.60px;top:785.60px;width:1366.40px;height:43.65px;background:#fafafa;"></div>
<div class="a" style="left:323.60px;top:784.60px;width:1366.40px;height:1.20px;background:#dedede;"></div>
<div class="a" style="left:344.00px;top:799.80px;width:15.00px;height:15.00px;background:#96d985;"></div>
<div class="t" style="left:369.80px;top:801.00px;font-size:14.4px;line-height:14.4px;font-family:'Liberation Sans',sans-serif;color:#2e87b0;transform:scaleX(0.9510);-webkit-text-stroke:0.15px #2e87b0;">rack</div>
<div class="t" style="left:794.45px;top:802.00px;font-size:12.7px;line-height:12.7px;font-family:'Liberation Mono',monospace;color:#333;">754.25</div>
<div class="t" style="left:844.00px;top:803.00px;font-size:9.8px;line-height:9.8px;font-family:'Liberation Sans',sans-serif;color:#a6a6a6;-webkit-text-stroke:0.15px #a6a6a6;">ms</div>
<div class="t" style="left:1151.75px;top:802.00px;font-size:12.7px;line-height:12.7px;font-family:'Liberation Mono',monospace;color:#333;">100.00</div>
<div class="t" style="left:1201.20px;top:804.00px;font-size:9.0px;line-height:9.0px;font-family:'Liberation Sans',sans-serif;color:#a6a6a6;-webkit-text-stroke:0.15px #a6a6a6;">%</div>
<div class="t" style="left:1456.00px;top:800.00px;font-size:14.2px;line-height:14.2px;font-family:'Liberation Sans',sans-serif;color:#3a3a3a;-webkit-text-stroke:0.15px #3a3a3a;">1</div>
<div class="t" style="left:1661.60px;top:800.00px;font-size:14.2px;line-height:14.2px;font-family:'Liberation Sans',sans-serif;color:#3a3a3a;-webkit-text-stroke:0.15px #3a3a3a;">0</div>
<div class="a" style="left:323.60px;top:829.25px;width:1366.40px;height:43.65px;background:#f2f2f2;"></div>
<div class="a" style="left:323.60px;top:828.25px;width:1366.40px;height:1.20px;background:#dedede;"></div>
<div class="a" style="left:344.00px;top:843.45px;width:15.00px;height:15.00px;background:#4570b0;"></div>
<div class="t" style="left:369.80px;top:845.00px;font-size:14.4px;line-height:14.4px;font-family:'Liberation Sans',sans-serif;color:#2e87b0;transform:scaleX(0.9510);-webkit-text-stroke:0.15px #2e87b0;">sinatra</div>
<div class="t" style="left:794.45px;top:846.00px;font-size:12.7px;line-height:12.7px;font-family:'Liberation Mono',monospace;color:#333;">753.89</div>
<div class="t" style="left:844.00px;top:847.00px;font-size:9.8px;line-height:9.8px;font-family:'Liberation Sans',sans-serif;color:#a6a6a6;-webkit-text-stroke:0.15px #a6a6a6;">ms</div>
<div class="t" style="left:1159.50px;top:846.00px;font-size:12.7px;line-height:12.7px;font-family:'Liberation Mono',monospace;color:#333;">99.95</div>
<div class="t" style="left:1201.20px;top:848.00px;font-size:9.0px;line-height:9.0px;font-family:'Liberation Sans',sans-serif;color:#a6a6a6;-webkit-text-stroke:0.15px #a6a6a6;">%</div>
<div class="t" style="left:1456.00px;top:844.00px;font-size:14.2px;line-height:14.2px;font-family:'Liberation Sans',sans-serif;color:#3a3a3a;-webkit-text-stroke:0.15px #3a3a3a;">1</div>
<div class="t" style="left:1661.60px;top:844.00px;font-size:14.2px;line-height:14.2px;font-family:'Liberation Sans',sans-serif;color:#3a3a3a;-webkit-text-stroke:0.15px #3a3a3a;">0</div>
<div class="a" style="left:323.60px;top:872.90px;width:1366.40px;height:43.65px;background:#fafafa;"></div>
<div class="a" style="left:323.60px;top:871.90px;width:1366.40px;height:1.20px;background:#dedede;"></div>
<div class="a" style="left:344.00px;top:887.10px;width:15.00px;height:15.00px;background:#a168ae;"></div>
<div class="t" style="left:369.80px;top:889.00px;font-size:14.4px;line-height:14.4px;font-family:'Liberation Sans',sans-serif;color:#2e87b0;transform:scaleX(0.9510);-webkit-text-stroke:0.15px #2e87b0;">excon</div>
<div class="t" style="left:794.45px;top:889.00px;font-size:12.7px;line-height:12.7px;font-family:'Liberation Mono',monospace;color:#333;">746.88</div>
<div class="t" style="left:844.00px;top:890.00px;font-size:9.8px;line-height:9.8px;font-family:'Liberation Sans',sans-serif;color:#a6a6a6;-webkit-text-stroke:0.15px #a6a6a6;">ms</div>
<div class="t" style="left:1159.50px;top:889.00px;font-size:12.7px;line-height:12.7px;font-family:'Liberation Mono',monospace;color:#333;">99.02</div>
<div class="t" style="left:1201.20px;top:891.00px;font-size:9.0px;line-height:9.0px;font-family:'Liberation Sans',sans-serif;color:#a6a6a6;-webkit-text-stroke:0.15px #a6a6a6;">%</div>
<div class="t" style="left:1456.00px;top:888.00px;font-size:14.2px;line-height:14.2px;font-family:'Liberation Sans',sans-serif;color:#3a3a3a;-webkit-text-stroke:0.15px #3a3a3a;">1</div>
<div class="t" style="left:1661.60px;top:888.00px;font-size:14.2px;line-height:14.2px;font-family:'Liberation Sans',sans-serif;color:#3a3a3a;-webkit-text-stroke:0.15px #3a3a3a;">0</div>
<div class="a" style="left:323.60px;top:916.55px;width:1366.40px;height:43.65px;background:#f2f2f2;"></div>
<div class="a" style="left:323.60px;top:915.55px;width:1366.40px;height:1.20px;background:#dedede;"></div>
<div class="a" style="left:344.00px;top:930.75px;width:15.00px;height:15.00px;background:#338db3;"></div>
<div class="t" style="left:370.28px;top:932.00px;font-size:14.4px;line-height:14.4px;font-family:'Liberation Sans',sans-serif;color:#2e87b0;transform:scaleX(0.9510);-webkit-text-stroke:0.15px #2e87b0;">jetty</div>
<div class="t" style="left:794.45px;top:933.00px;font-size:12.7px;line-height:12.7px;font-family:'Liberation Mono',monospace;color:#333;">741.73</div>
<div class="t" style="left:844.00px;top:934.00px;font-size:9.8px;line-height:9.8px;font-family:'Liberation Sans',sans-serif;color:#a6a6a6;-webkit-text-stroke:0.15px #a6a6a6;">ms</div>
<div class="t" style="left:1159.50px;top:933.00px;font-size:12.7px;line-height:12.7px;font-family:'Liberation Mono',monospace;color:#333;">98.34</div>
<div class="t" style="left:1201.20px;top:935.00px;font-size:9.0px;line-height:9.0px;font-family:'Liberation Sans',sans-serif;color:#a6a6a6;-webkit-text-stroke:0.15px #a6a6a6;">%</div>
<div class="t" style="left:1456.00px;top:931.00px;font-size:14.2px;line-height:14.2px;font-family:'Liberation Sans',sans-serif;color:#3a3a3a;-webkit-text-stroke:0.15px #3a3a3a;">1</div>
<div class="t" style="left:1661.60px;top:931.00px;font-size:14.2px;line-height:14.2px;font-family:'Liberation Sans',sans-serif;color:#3a3a3a;-webkit-text-stroke:0.15px #3a3a3a;">0</div>
<div class="a" style="left:323.60px;top:960.20px;width:1366.40px;height:43.65px;background:#fafafa;"></div>
<div class="a" style="left:323.60px;top:959.20px;width:1366.40px;height:1.20px;background:#dedede;"></div>
<div class="a" style="left:344.00px;top:974.40px;width:15.00px;height:15.00px;background:#b14f00;"></div>
<div class="t" style="left:369.80px;top:976.00px;font-size:14.4px;line-height:14.4px;font-family:'Liberation Sans',sans-serif;color:#2e87b0;transform:scaleX(0.9510);-webkit-text-stroke:0.15px #2e87b0;">apache_http_client</div>
<div class="t" style="left:794.45px;top:977.00px;font-size:12.7px;line-height:12.7px;font-family:'Liberation Mono',monospace;color:#333;">735.16</div>
<div class="t" style="left:844.00px;top:978.00px;font-size:9.8px;line-height:9.8px;font-family:'Liberation Sans',sans-serif;color:#a6a6a6;-webkit-text-stroke:0.15px #a6a6a6;">ms</div>
<div class="t" style="left:1155.30px;top:977.00px;font-size:12.4px;line-height:12.4px;font-family:'Liberation Mono',monospace;color:#333;">(async)</div>
<div class="t" style="left:1456.00px;top:975.00px;font-size:14.2px;line-height:14.2px;font-family:'Liberation Sans',sans-serif;color:#3a3a3a;-webkit-text-stroke:0.15px #3a3a3a;">1</div>
<div class="t" style="left:1661.60px;top:975.00px;font-size:14.2px;line-height:14.2px;font-family:'Liberation Sans',sans-serif;color:#3a3a3a;-webkit-text-stroke:0.15px #3a3a3a;">0</div>
<div class="a" style="left:323.60px;top:1003.85px;width:1366.40px;height:43.65px;background:#f2f2f2;"></div>
<div class="a" style="left:323.60px;top:1002.85px;width:1366.40px;height:1.20px;background:#dedede;"></div>
<div class="a" style="left:344.00px;top:1018.05px;width:15.00px;height:15.00px;background:#338db3;"></div>
<div class="t" style="left:370.28px;top:1020.00px;font-size:14.4px;line-height:14.4px;font-family:'Liberation Sans',sans-serif;color:#2e87b0;transform:scaleX(0.9510);-webkit-text-stroke:0.15px #2e87b0;">jetty</div>
<div class="t" style="left:794.45px;top:1020.00px;font-size:12.7px;line-height:12.7px;font-family:'Liberation Mono',monospace;color:#333;">734.51</div>
<div class="t" style="left:844.00px;top:1021.00px;font-size:9.8px;line-height:9.8px;font-family:'Liberation Sans',sans-serif;color:#a6a6a6;-webkit-text-stroke:0.15px #a6a6a6;">ms</div>
<div class="t" style="left:1155.30px;top:1020.00px;font-size:12.4px;line-height:12.4px;font-family:'Liberation Mono',monospace;color:#333;">(async)</div>
<div class="t" style="left:1456.00px;top:1019.00px;font-size:14.2px;line-height:14.2px;font-family:'Liberation Sans',sans-serif;color:#3a3a3a;-webkit-text-stroke:0.15px #3a3a3a;">1</div>
<div class="t" style="left:1661.60px;top:1019.00px;font-size:14.2px;line-height:14.2px;font-family:'Liberation Sans',sans-serif;color:#3a3a3a;-webkit-text-stroke:0.15px #3a3a3a;">0</div>
<div class="a" style="left:323.60px;top:784.40px;width:1366.40px;height:1.80px;background:#e2e2e2;"></div>
<div class="a" style="left:646.20px;top:749.80px;width:1.10px;height:300.00px;background:#dedede;"></div>
<div class="a" style="left:877.90px;top:749.80px;width:1.10px;height:300.00px;background:#dedede;"></div>
<div class="a" style="left:1229.50px;top:749.80px;width:1.10px;height:300.00px;background:#dedede;"></div>
<div class="a" style="left:1486.00px;top:749.80px;width:1.10px;height:300.00px;background:#dedede;"></div>
<div class="t" style="left:344.00px;top:762.00px;font-size:11.2px;line-height:11.2px;font-family:'Liberation Sans',sans-serif;color:#f5901e;font-weight:bold;transform:scaleX(0.9281);">SPAN LAYER</div>
<div class="t" style="left:799.40px;top:762.00px;font-size:11.2px;line-height:11.2px;font-family:'Liberation Sans',sans-serif;color:#f5901e;font-weight:bold;transform:scaleX(0.9923);">DURATION</div>
<div class="t" style="left:1084.00px;top:762.00px;font-size:11.2px;line-height:11.2px;font-family:'Liberation Sans',sans-serif;color:#f5901e;font-weight:bold;transform:scaleX(0.9503);">% OF TRACE DURATION</div>
<div class="t" style="left:1394.10px;top:762.00px;font-size:11.2px;line-height:11.2px;font-family:'Liberation Sans',sans-serif;color:#f5901e;font-weight:bold;transform:scaleX(0.9720);">SPAN COUNT</div>
<div class="t" style="left:1628.00px;top:762.00px;font-size:11.2px;line-height:11.2px;font-family:'Liberation Sans',sans-serif;color:#f5901e;font-weight:bold;transform:scaleX(0.8750);">ERRORS</div>
<svg style="left:0;top:0" width="1951" height="1232" viewBox="0 0 1951 1232"><circle cx="676.4" cy="767.1" r="8.3" fill="#fff" stroke="#c4c4c4" stroke-width="1.2"/><line x1="676.4" y1="763.3" x2="676.4" y2="768" stroke="#f28a1a" stroke-width="1.9" stroke-linecap="round"/><path d="M672.2,767.2 L680.8,767.2 L676.4,771.7 Z" fill="#f28a1a"/></svg>
</div></div>
</body></html>
